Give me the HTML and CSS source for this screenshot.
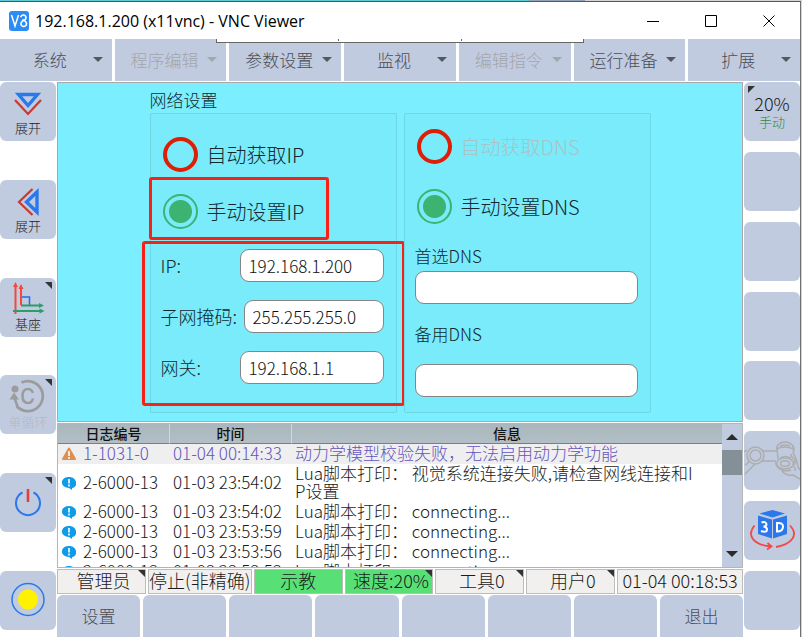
FILE: index.html
```html
<!DOCTYPE html>
<html lang="zh-CN">
<head>
<meta charset="utf-8">
<title>192.168.1.200 (x11vnc) - VNC Viewer</title>
<link rel="stylesheet" href="styles.css">
</head>
<body>
<div class="desktop"></div>
<div class="window">
  <header class="titlebar">
    <svg class="app-icon" viewBox="0 0 20 20" aria-hidden="true"><rect width="20" height="20" rx="3" fill="#2b8cf5"/><path d="M2.500 4l3.500 11L9.500 4M11.500 6q2.500-3.500 5-1 1.500 2.500-1 4l-2 1q-2.500 2-1 4.500 2 2 4.500 0 1.500-2.500-1-4.500l-2.500-1.500" fill="none" stroke="#fff" stroke-width="1.500"/></svg>
    <h1 class="title">192.168.1.200 (x11vnc) - VNC Viewer</h1>
    <div class="controls">
      <button aria-label="最小化"><svg viewBox="0 0 14 14"><path d="M1 7.500h12"/></svg></button>
      <button aria-label="最大化"><svg viewBox="0 0 14 14"><path d="M1.500 1.500h11v11h-11z"/></svg></button>
      <button aria-label="关闭"><svg viewBox="0 0 14 14"><path d="M1.500 1.500l11 11M12.500 1.500l-11 11"/></svg></button>
    </div>
    <div class="toolbar-tab"><i></i><i></i></div>
  </header>
  <nav class="menu">
    <button>系统</button>
    <button disabled>程序编辑</button>
    <button>参数设置</button>
    <button>监视</button>
    <button disabled>编辑指令</button>
    <button>运行准备</button>
    <button>扩展</button>
  </nav>
  <div class="workspace">
    <aside class="side">
      <button class="key"><svg class="icon-s" viewBox="0 0 28 24"><path d="M4.500 2.500h19L14 13.500z" fill="none" stroke="#2a78ec" stroke-width="3.400"/><path d="M1 8l13 14L27 8" fill="none" stroke="#c93a2c" stroke-width="2.200"/></svg><span>展开</span></button>
      <button class="key"><svg class="icon-m" viewBox="0 0 28 30"><path d="M23 5v20L12.500 15z" fill="none" stroke="#2a78ec" stroke-width="3.400"/><path d="M18.500 2L5 15l13.500 13" fill="none" stroke="#c93a2c" stroke-width="2.200"/></svg><span>展开</span></button>
      <button class="key corner"><svg class="icon-l" viewBox="0 0 34 34"><path d="M10 16h8.500v8" fill="none" stroke="#2a6be8" stroke-width="1.500"/><path d="M4.500 33V5M10 24V7" stroke="#f4483a" stroke-width="2"/><path d="M2 6l2.500-5L7 6zM7.500 8L10 3l2.500 5z" fill="#f4483a"/><path d="M10 24.500h18M2 30h27" stroke="#2a9d68" stroke-width="2"/><path d="M28 22l5 2.500-5 2.500zM28.500 27.500l5 2.500-5 2.500z" fill="#2a9d68"/></svg><span>基座</span></button>
      <button class="key corner" disabled><svg class="icon-l" viewBox="0 0 34 34"><path d="M10.500 3.500A15 15 0 1 1 5.500 27" fill="none" stroke="#9c9c9c" stroke-width="2.800"/><circle cx="4" cy="10" r="3.500" fill="#9c9c9c"/><path d="M-1.500 20.500L3 13.500l5 7z" fill="#9c9c9c"/><path d="M3.500 19l3 8.500" stroke="#9c9c9c" stroke-width="2.500"/><path d="M22 14q-1.500-4-5-4-5.500 0-5.500 7t5.500 7q4 0 5-4.500" fill="none" stroke="#9c9c9c" stroke-width="2.600"/></svg><span>单循环</span></button>
      <button class="key corner" aria-label="电源"><svg class="icon-l" viewBox="0 0 34 34"><path d="M11.500 6.500A12 12 0 1 0 22.500 6.500" fill="none" stroke="#2a78ec" stroke-width="2"/><path d="M17 3V16" stroke="#e0403c" stroke-width="2.600"/></svg></button>
      <button class="key" aria-label="指示灯"><svg class="icon-l" viewBox="0 0 34 34"><circle cx="17" cy="16.500" r="16" fill="none" stroke="#2a78ec" stroke-width="1.500"/><circle cx="17" cy="16.500" r="10" fill="#fff200"/></svg></button>
    </aside>
    <main class="center">
      <section class="network">
        <div class="network-body">
          <h2>网络设置</h2>
          <div class="groups">
            <fieldset class="group group-ip">
              <div class="mark mark-mode"></div>
              <div class="mark mark-fields"></div>
              <label class="choice"><input type="radio" name="ip"><span>自动获取IP</span></label>
              <label class="choice"><input type="radio" name="ip" checked><span>手动设置IP</span></label>
              <div class="fields">
                <div class="field"><label for="ip">IP:</label><input id="ip" type="text" value="192.168.1.200"></div>
                <div class="field field-mask"><label for="mask">子网掩码:</label><input id="mask" type="text" value="255.255.255.0"></div>
                <div class="field"><label for="gateway">网关:</label><input id="gateway" type="text" value="192.168.1.1"></div>
              </div>
            </fieldset>
            <fieldset class="group group-dns">
              <label class="choice"><input type="radio" name="dns" disabled><span>自动获取DNS</span></label>
              <label class="choice"><input type="radio" name="dns" checked><span>手动设置DNS</span></label>
              <div class="stack">
                <label for="dns1">首选DNS</label>
                <input id="dns1" type="text">
                <label for="dns2">备用DNS</label>
                <input id="dns2" class="second" type="text">
              </div>
            </fieldset>
          </div>
        </div>
      </section>
      <section class="log">
        <div class="log-view">
          <table>
            <colgroup><col class="col-id"><col class="col-time"><col></colgroup>
            <thead><tr><th>日志编号</th><th>时间</th><th>信息</th></tr></thead>
            <tbody>
              <tr class="warn"><td><svg viewBox="0 0 14 14"><path d="M7 1.500L13 12H1z" fill="#dd8f52" stroke="#dd8f52" stroke-width="2" stroke-linejoin="round"/><path d="M7 4v5M7 10v2" stroke="#fff" stroke-width="1.600"/></svg>1-1031-0</td><td>01-04 00:14:33</td><td>动力学模型校验失败，无法启用动力学功能</td></tr>
              <tr><td><svg viewBox="0 0 14 14"><path d="M7 1c9 0 9 11 3 11v2l-3-2C-2.500 12-2.500 1 7 1z" fill="#0e9be8"/><path d="M7 3v4.500M7 8.500v2" stroke="#fff" stroke-width="1.600"/></svg>2-6000-13</td><td>01-03 23:54:02</td><td>Lua脚本打印<span class="colon">：</span> 视觉系统连接失败,请检查网线连接和IP设置</td></tr>
              <tr><td><svg viewBox="0 0 14 14"><path d="M7 1c9 0 9 11 3 11v2l-3-2C-2.500 12-2.500 1 7 1z" fill="#0e9be8"/><path d="M7 3v4.500M7 8.500v2" stroke="#fff" stroke-width="1.600"/></svg>2-6000-13</td><td>01-03 23:54:02</td><td>Lua脚本打印<span class="colon">：</span> connecting...</td></tr>
              <tr><td><svg viewBox="0 0 14 14"><path d="M7 1c9 0 9 11 3 11v2l-3-2C-2.500 12-2.500 1 7 1z" fill="#0e9be8"/><path d="M7 3v4.500M7 8.500v2" stroke="#fff" stroke-width="1.600"/></svg>2-6000-13</td><td>01-03 23:53:59</td><td>Lua脚本打印<span class="colon">：</span> connecting...</td></tr>
              <tr><td><svg viewBox="0 0 14 14"><path d="M7 1c9 0 9 11 3 11v2l-3-2C-2.500 12-2.500 1 7 1z" fill="#0e9be8"/><path d="M7 3v4.500M7 8.500v2" stroke="#fff" stroke-width="1.600"/></svg>2-6000-13</td><td>01-03 23:53:56</td><td>Lua脚本打印<span class="colon">：</span> connecting...</td></tr>
              <tr><td><svg viewBox="0 0 14 14"><path d="M7 1c9 0 9 11 3 11v2l-3-2C-2.500 12-2.500 1 7 1z" fill="#0e9be8"/><path d="M7 3v4.500M7 8.500v2" stroke="#fff" stroke-width="1.600"/></svg>2-6000-13</td><td>01-03 23:53:53</td><td>Lua脚本打印<span class="colon">：</span> connecting...</td></tr>
            </tbody>
          </table>
        </div>
        <div class="scrollbar">
          <button class="up" aria-label="向上滚动"></button>
          <div class="track"><div class="thumb"></div></div>
          <button class="down" aria-label="向下滚动"></button>
        </div>
      </section>
      <div class="status">
        <button class="corner">管理员</button>
        <button>停止(非精确)</button>
        <button class="on">示教</button>
        <button class="on corner">速度:20%</button>
        <button class="corner">工具0</button>
        <button class="corner">用户0</button>
        <button>01-04 00:18:53</button>
      </div>
      <div class="softkeys">
        <button>设置</button>
        <button aria-label="空"></button>
        <button aria-label="空"></button>
        <button aria-label="空"></button>
        <button aria-label="空"></button>
        <button aria-label="空"></button>
        <button aria-label="空"></button>
        <button>退出</button>
      </div>
    </main>
    <aside class="side">
      <button class="key speed"><b>20%</b><em>手动</em></button>
      <button class="key" aria-label="空"></button>
      <button class="key" aria-label="空"></button>
      <button class="key" aria-label="空"></button>
      <button class="key" aria-label="空"></button>
      <button class="key" aria-label="拖动示教" disabled><svg class="icon-full" viewBox="0 0 56 59"><g fill="none" stroke="#adadad" stroke-width="1.500" stroke-linejoin="round"><circle cx="11.500" cy="24.500" r="8.500"/><circle cx="11.500" cy="24.500" r="5.500"/><path d="M18 20h15M18 30h14M5 30q-1 3-4 4M11 33L1 43M3 19l-3 2"/><path d="M32.500 18q1-7 8.500-7t9 7l-1 5M32.500 18q8-4 17 0M33 18l1 10M36 15q5-2 10 0"/><ellipse cx="41" cy="32.500" rx="8.500" ry="5.500"/><ellipse cx="41" cy="32.500" rx="4.500" ry="2.800"/><path d="M36 27q5-3 11 0M49.500 23q3 4 4.500 13l2 3M47 23q0 3 3 5 2 3 0 6M32 31q-1 4 4 7 5 3 11 1M38 40q4 5 11 4l7 4M49 35q3 2 2 5"/></g></svg></button>
      <button class="key" aria-label="三维视图"><svg class="icon-full" viewBox="0 0 56 59"><path d="M15.500 12.500L28.500 9l12.500 3.500L28.500 16.500z" fill="#2a78ec"/><path d="M14 14.500l14 4v19L14 33zM43 14.500l-14 4v19L43 33z" fill="#2a78ec"/><path d="M28.500 18v19" stroke="#c1cbe0"/><path d="M17.500 21.500q4-1.500 5 1.500 0 2.500-3 2.500 3.500 .5 3.500 3 0 3.500-6 1.500M33 22v8.500q6 0 6-5 0-4-6-3.500z" fill="none" stroke="#fff" stroke-width="2"/><path d="M10.500 24.500C2 35 10 44 27 45.500M23.500 42l4 3.500-4.500 3M46 24.500C55 34 48 43 32 46" fill="none" stroke="#f3484b" stroke-width="1.800"/></svg></button>
      <button class="key" aria-label="空"></button>
    </aside>
  </div>
</div>
</body>
</html>
```
FILE: styles.css
```css
* {
  box-sizing: border-box;
}

body {
  margin: 0;
  height: 100vh;
  padding-right: 1px;
  display: flex;
  flex-direction: column;
  overflow: hidden;
  background: #d4d4d4;
  color: #1a1a1a;
  font-family: "Noto Sans CJK SC", sans-serif;
  font-weight: 300;
}

button {
  margin: 0;
  padding: 0;
  border: 0;
  font: inherit;
  color: inherit;
  background: none;
}

h1,
h2 {
  margin: 0;
  font-weight: inherit;
}

.desktop {
  height: 1px;
  background: linear-gradient(90deg, #5cc9d5 0 66%, #93a2ba 66% 73%, #d4d4d4 73%);
}

.window {
  flex: 1;
  min-height: 0;
  display: flex;
  flex-direction: column;
  background: #fff;
  border-top: 1px solid #4c5d60;
  border-right: 1px solid #707070;
}

.titlebar {
  position: relative;
  z-index: 1;
  display: flex;
  align-items: center;
  height: 37px;
  padding-left: 9px;
}

.app-icon {
  width: 20px;
  height: 20px;
}

.title {
  margin-left: 6px;
  font: 400 16px/20px "Open Sans", sans-serif;
  color: #000;
}

.controls {
  display: flex;
  margin-left: auto;
  padding-right: 2px;
}

.controls button {
  width: 58px;
  height: 36px;
  display: grid;
  place-items: center;
}

.controls svg {
  width: 14px;
  height: 14px;
  fill: none;
  stroke: #000;
}

.toolbar-tab {
  position: absolute;
  top: 100%;
  left: 27%;
  right: 27%;
  height: 4px;
  display: flex;
  justify-content: space-evenly;
  background: #fff;
  border: 1px solid #666;
  border-top: 0;
}

.toolbar-tab i {
  width: 1px;
  height: 2px;
  background: #666;
}

.menu {
  display: grid;
  grid-template-columns: repeat(7, 1fr);
  gap: 3px;
}

.menu button {
  position: relative;
  height: 42px;
  padding: 0 12px 2px 0;
  background: #c1cbe0;
  color: #4a4e56;
  font-size: 17px;
}

.menu button::after {
  content: "";
  position: absolute;
  right: 9px;
  top: 18px;
  border: 5px solid transparent;
  border-top-color: #55585c;
  border-bottom: 0;
}

.menu button:disabled {
  color: #a3a6ab;
}

.menu button:disabled::after {
  border-top-color: #a3a6ab;
}

.workspace {
  flex: 1;
  min-height: 0;
  padding-top: 1px;
  display: grid;
  grid-template-columns: 56px 1fr 56px;
  grid-template-rows: minmax(0, 1fr);
  gap: 1px;
}

.side {
  display: flex;
  flex-direction: column;
  justify-content: space-between;
  padding-bottom: 7px;
}

.key {
  position: relative;
  height: 59px;
  display: flex;
  flex-direction: column;
  align-items: center;
  justify-content: center;
  background: #c1cbe0;
  border-radius: 6px;
  font-size: 13px;
  line-height: 18px;
}

.key:disabled span {
  color: #b3b7c0;
}

.icon-s {
  width: 28px;
  height: 24px;
  margin: 5px 0 3px;
}

.icon-m {
  width: 28px;
  height: 30px;
  margin-top: 4px;
}

.icon-l {
  width: 34px;
  height: 34px;
  overflow: visible;
}

.icon-full {
  width: 56px;
  height: 59px;
}

.corner {
  position: relative;
}

.corner::after {
  content: "";
  position: absolute;
  top: 0;
  right: 0;
  border-top: 7px solid #333;
  border-left: 7px solid transparent;
}

.key.corner::after {
  top: 4px;
  right: 4px;
}

.speed::after {
  content: "";
  position: absolute;
  top: 4px;
  left: 4px;
  border-top: 7px solid #333;
  border-right: 7px solid transparent;
}

.speed b {
  font-weight: 300;
  font-size: 18px;
  line-height: 20px;
}

.speed em {
  font-style: normal;
  color: #2c8a37;
}

.center {
  display: flex;
  flex-direction: column;
  min-width: 0;
}

.network {
  display: flex;
  justify-content: center;
  padding: 5px 0 8px;
  border: 1px solid #a9a9a9;
  background: #7befff;
  color: #12292e;
}

.network h2 {
  margin-bottom: 1px;
  font-size: 17px;
  line-height: 24px;
}

.groups {
  display: grid;
  grid-template-columns: repeat(2, 247px);
  gap: 7px;
}

.group {
  position: relative;
  min-width: 0;
  height: 300px;
  margin: 0;
  padding: 0 12px 0 10px;
  border: 1px solid #6fd6e3;
  border-radius: 2px;
  background: #79ebfb;
}

.group-ip {
  padding-top: 23px;
}

.group-dns {
  padding-top: 15px;
}

.choice {
  display: flex;
  align-items: center;
  gap: 9px;
  height: 35px;
  padding-left: 2px;
  font-size: 20px;
}

.group-ip .choice + .choice {
  margin-top: 22px;
}

.group-dns .choice + .choice {
  margin-top: 25px;
}

.choice input {
  appearance: none;
  width: 35px;
  height: 35px;
  margin: 0;
  border: 4px solid #dc1f06;
  border-radius: 50%;
}

.choice input:checked {
  border: 2px solid #3cb371;
  background: radial-gradient(circle, #3cb371 11px, transparent 12px);
}

.choice input:disabled + span {
  color: #a9c3c6;
}

.fields {
  display: grid;
  gap: 18px;
  margin-top: 20px;
}

.field {
  display: grid;
  grid-template-columns: 79px 1fr;
  align-items: center;
  font-size: 18px;
}

.field-mask {
  grid-template-columns: 83px 1fr;
}

.field label {
  padding-bottom: 2px;
  white-space: nowrap;
}

.field input,
.stack input {
  width: 100%;
  min-width: 0;
  height: 33px;
  margin: 0;
  padding: 0 8px;
  border: 1px solid #858585;
  border-radius: 9px;
  background: #fff;
  color: #111;
  font: inherit;
  font-size: 17px;
}

.stack {
  display: grid;
  margin-top: 20px;
  font-size: 17px;
  line-height: 24px;
}

.stack input {
  margin: 3px 0 18px;
}

.stack .second {
  margin: 18px 0 0;
}

.mark {
  position: absolute;
  border: 3px solid #fa2013;
  border-radius: 3px;
  pointer-events: none;
}

.mark-mode {
  top: 63px;
  left: -2px;
  width: 180px;
  height: 63px;
}

.mark-fields {
  top: 127px;
  left: -9px;
  right: -9px;
  height: 165px;
}

.log {
  flex: 1;
  min-height: 0;
  display: flex;
  margin-top: 1px;
  border: 1px solid #b5b5b5;
  background: #fff;
}

.log-view {
  flex: 1;
  overflow: hidden;
}

.log table {
  width: 100%;
  table-layout: fixed;
  border-collapse: separate;
  border-spacing: 0;
}

.col-id {
  width: 112px;
}

.col-time {
  width: 122px;
}

.log th {
  height: 20px;
  padding: 0 0 1px;
  border-right: 1px solid #d0d8dc;
  border-bottom: 1px solid #777f84;
  background: linear-gradient(#a9b6bd, #b3bfc5);
  color: #111;
  font-size: 14px;
  line-height: 18px;
  font-weight: 500;
}

.log th:last-child {
  border-right: 0;
}

.log td {
  padding: 0 3px 2px;
  font-size: 17px;
  line-height: 18px;
  white-space: nowrap;
}

.log td:last-child {
  padding-right: 28px;
  white-space: normal;
  word-break: break-all;
}

.log td svg {
  width: 14px;
  height: 14px;
  margin: 0 7px 0 1px;
  vertical-align: -1px;
}

.colon {
  font-family: "Noto Sans CJK TC", sans-serif;
}

.log .warn td {
  color: #6354be;
  background: #efefef;
}

.scrollbar {
  width: 20px;
  display: flex;
  flex-direction: column;
  background: #c1cbe0;
}

.scrollbar button {
  height: 26px;
  display: grid;
  place-items: center;
}

.scrollbar button::after {
  content: "";
  border: 6px solid transparent;
}

.scrollbar .up::after {
  border-bottom-color: #2b2b2b;
  border-top: 0;
}

.scrollbar .down::after {
  border-top-color: #2b2b2b;
  border-bottom: 0;
}

.track {
  flex: 1;
}

.thumb {
  height: 25px;
  background: #839097;
}

.status {
  display: grid;
  grid-template-columns: 89fr 104fr 89fr 89fr 89fr 89fr 126fr;
  gap: 2px;
  margin-top: 1px;
}

.status button {
  min-width: 0;
  height: 25px;
  padding-bottom: 2px;
  border: 1px solid #bcbcb8;
  background: #f1f0ee;
  font-size: 18px;
  line-height: 21px;
  white-space: nowrap;
}

.status .corner {
  padding-left: 4px;
}

.status .on {
  background: #58e077;
}

.softkeys {
  display: grid;
  grid-template-columns: repeat(8, 1fr);
  gap: 3px;
  margin-top: 1px;
}

.softkeys button {
  height: 42px;
  padding-bottom: 2px;
  border-radius: 6px 6px 0 0;
  background: #c1cbe0;
  color: #4a4e56;
  font-size: 17px;
}
```
